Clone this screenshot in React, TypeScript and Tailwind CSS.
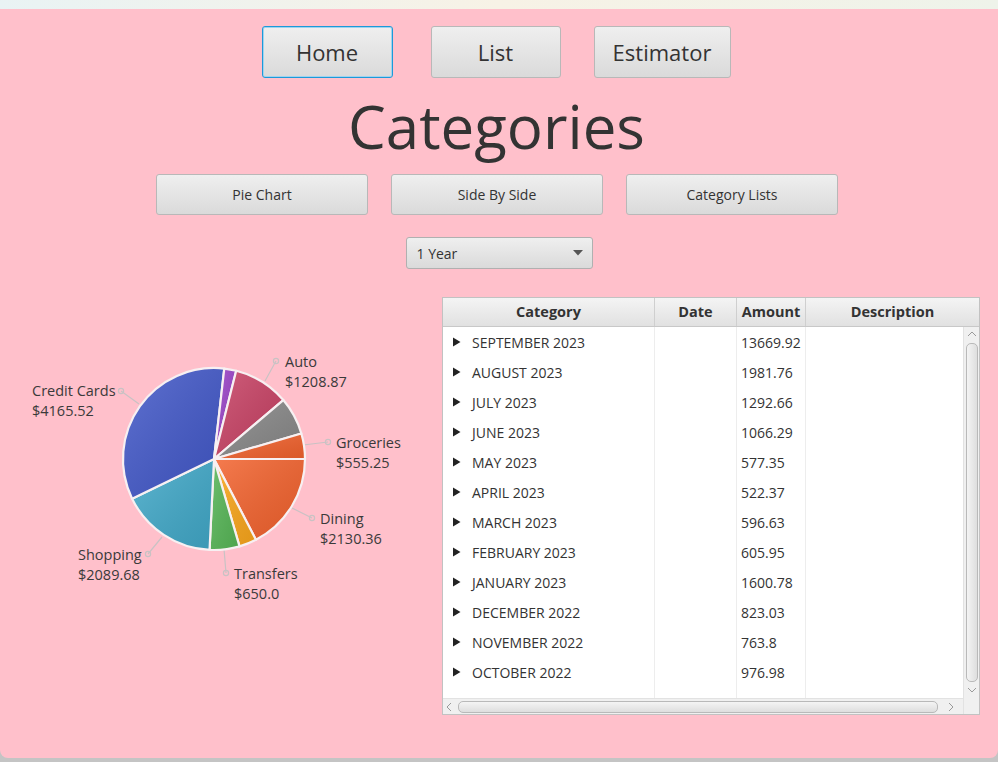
import React from "react";

const slices = [
  { name: "Dining", v: 2130.36, c: "#f3622d" },
  { name: "y", v: 380, c: "#fba71b" },
  { name: "Transfers", v: 650, c: "#57b757" },
  { name: "Shopping", v: 2089.68, c: "#41a9c9" },
  { name: "Credit Cards", v: 4165.52, c: "#4258c9" },
  { name: "p", v: 260, c: "#9a42c8" },
  { name: "Auto", v: 1208.87, c: "#c84164" },
  { name: "g", v: 820, c: "#888888" },
  { name: "Groceries", v: 555.25, c: "#f3622d" },
];

const labels = [
  { t: "Credit Cards", v: "$4165.52", x: 32, y: 99, m: [121, 94], e: [139, 107] },
  { t: "Auto", v: "$1208.87", x: 285, y: 70, m: [276, 64], e: [265, 84] },
  { t: "Groceries", v: "$555.25", x: 336, y: 151, m: [328, 145], e: [303, 148] },
  { t: "Dining", v: "$2130.36", x: 320, y: 227, m: [312, 221], e: [292, 211] },
  { t: "Shopping", v: "$2089.68", x: 78, y: 263, m: [148, 257], e: [162, 240] },
  { t: "Transfers", v: "$650.0", x: 234, y: 282, m: [226, 276], e: [224, 252] },
];

function Pie() {
  const cx = 214;
  const cy = 162;
  const r = 91;
  const total = slices.reduce((a, s) => a + s.v, 0);
  let acc = 0;
  const paths = slices.map((s, i) => {
    const a0 = (acc / total) * Math.PI * 2;
    acc += s.v;
    const a1 = (acc / total) * Math.PI * 2;
    const x0 = cx + r * Math.cos(a0);
    const y0 = cy + r * Math.sin(a0);
    const x1 = cx + r * Math.cos(a1);
    const y1 = cy + r * Math.sin(a1);
    const large = a1 - a0 > Math.PI ? 1 : 0;
    const d = `M${cx},${cy} L${x0},${y0} A${r},${r} 0 ${large} 1 ${x1},${y1} Z`;
    return (
      <g key={i}>
        <path d={d} fill={s.c} />
        <path d={d} fill="url(#shade)" stroke="#f7f0f2" strokeWidth={2.2} strokeLinejoin="round" />
      </g>
    );
  });
  return (
    <svg width={442} height={418} viewBox="0 0 442 418" className="shrink-0">
      <defs>
        <linearGradient id="shade" x1="0" y1="0" x2="1" y2="1">
          <stop offset="0" stopColor="#ffffff" stopOpacity="0.16" />
          <stop offset="1" stopColor="#000000" stopOpacity="0.1" />
        </linearGradient>
      </defs>
      {labels.map((l, i) => (
        <g key={"l" + i}>
          <line x1={l.m[0]} y1={l.m[1]} x2={l.e[0]} y2={l.e[1]} stroke="#c9c2c4" strokeWidth={1.2} />
          <circle cx={l.m[0]} cy={l.m[1]} r={2.6} fill="none" stroke="#c9c2c4" strokeWidth={1.2} />
        </g>
      ))}
      {paths}
      {labels.map((l, i) => (
        <text key={"t" + i} x={l.x} y={l.y} fontSize={14.5} fill="#3a3a3a" fontFamily="'Open Sans', sans-serif">
          <tspan x={l.x} y={l.y}>{l.t}</tspan>
          <tspan x={l.x} y={l.y + 20}>{l.v}</tspan>
        </text>
      ))}
    </svg>
  );
}

const rows: [string, string][] = [
  ["SEPTEMBER 2023", "13669.92"],
  ["AUGUST 2023", "1981.76"],
  ["JULY 2023", "1292.66"],
  ["JUNE 2023", "1066.29"],
  ["MAY 2023", "577.35"],
  ["APRIL 2023", "522.37"],
  ["MARCH 2023", "596.63"],
  ["FEBRUARY 2023", "605.95"],
  ["JANUARY 2023", "1600.78"],
  ["DECEMBER 2022", "823.03"],
  ["NOVEMBER 2022", "763.8"],
  ["OCTOBER 2022", "976.98"],
];

function Table() {
  return (
    <div className="w-[538px] h-[418px] border border-[#c2c2c2] bg-white flex flex-col shrink-0">
      <div className="flex h-[29px] bg-gradient-to-b from-[#f4f4f4] to-[#e1e1e1] border-b border-[#c8c8c8] text-[14.5px] font-bold text-[#333]">
        <div className="w-[212px] flex items-center justify-center border-r border-[#cfcfcf]">Category</div>
        <div className="w-[82px] flex items-center justify-center border-r border-[#cfcfcf]">Date</div>
        <div className="w-[69px] flex items-center justify-center border-r border-[#cfcfcf]">Amount</div>
        <div className="flex-1 flex items-center justify-center">Description</div>
      </div>
      <div className="flex flex-1">
        <div className="flex-1 flex flex-col relative">
          <div className="flex flex-1">
            <div className="w-[212px] border-r border-[#ededed] flex flex-col">
              {rows.map(([n]) => (
                <div key={n} className="h-[30px] flex items-center pl-[10px] text-[14px] text-[#333]">
                  <svg width="8" height="10" viewBox="0 0 8 10" className="mr-[11px]">
                    <path d="M0 0.5 L7.5 5 L0 9.5 Z" fill="#222" />
                  </svg>
                  <span>{n}</span>
                </div>
              ))}
            </div>
            <div className="w-[82px] border-r border-[#ededed]" />
            <div className="w-[69px] border-r border-[#ededed] flex flex-col">
              {rows.map(([n, a]) => (
                <div key={n} className="h-[30px] flex items-center pl-[4px] text-[14px] text-[#333]">
                  {a}
                </div>
              ))}
            </div>
            <div className="flex-1" />
          </div>
          <div className="h-[16px] bg-[#f0f0f0] border-t border-[#e2e2e2] flex items-center">
            <svg width="14" height="16" viewBox="0 0 14 16">
              <path d="M8 4 L4 8 L8 12" fill="none" stroke="#9a9a9a" strokeWidth="1" />
            </svg>
            <div className="flex-1 h-[12px] mx-[1px] rounded-[5px] border border-[#b9b9b9] bg-gradient-to-b from-[#f4f4f4] to-[#dedede]" />
            <svg width="24" height="16" viewBox="0 0 24 16">
              <path d="M10 4 L14 8 L10 12" fill="none" stroke="#9a9a9a" strokeWidth="1" />
            </svg>
          </div>
        </div>
        <div className="w-[16px] bg-[#f0f0f0] border-l border-[#e2e2e2] flex flex-col items-center">
          <svg width="14" height="16" viewBox="0 0 14 16">
            <path d="M3 9 L7 5 L11 9" fill="none" stroke="#9a9a9a" strokeWidth="1" />
          </svg>
          <div className="flex-1 w-[12px] rounded-[5px] border border-[#b9b9b9] bg-gradient-to-r from-[#f4f4f4] to-[#dedede]" />
          <svg width="14" height="16" viewBox="0 0 14 16">
            <path d="M3 6 L7 10 L11 6" fill="none" stroke="#9a9a9a" strokeWidth="1" />
          </svg>
          <div className="h-[16px]" />
        </div>
      </div>
    </div>
  );
}

const btn =
  "border border-[#b8b8b8] rounded-[3px] bg-gradient-to-b from-[#efefef] to-[#dadada] text-[#333] flex items-center justify-center";

export default function App() {
  return (
    <div className="w-[998px] h-[762px] bg-[#c4c4c4] font-['Open_Sans',sans-serif] flex flex-col overflow-hidden">
      <div className="h-[9px] bg-gradient-to-r from-[#e9f3f4] via-[#f7f2e6] to-[#eef3ea]" />
      <div className="h-[749px] bg-[#ffc0cb] rounded-b-[8px] flex flex-col items-center">
        <div className="flex mt-[17px] ml-[-6px]">
          <div className={`${btn} w-[131px] h-[52px] text-[22px] !border-[#1c9ad9] shadow-[inset_0_0_0_1px_#9fd3ef]`}>Home</div>
          <div className={`${btn} w-[130px] h-[52px] text-[22px] ml-[38px]`}>List</div>
          <div className={`${btn} w-[137px] h-[52px] text-[22px] ml-[33px]`}>Estimator</div>
        </div>
        <div className="h-[96px] flex items-center justify-center text-[60px] text-[#333] leading-none ml-[-5px]">
          Categories
        </div>
        <div className="flex gap-[23px] ml-[-4px]">
          <div className={`${btn} w-[212px] h-[41px] text-[14px]`}>Pie Chart</div>
          <div className={`${btn} w-[212px] h-[41px] text-[14px]`}>Side By Side</div>
          <div className={`${btn} w-[212px] h-[41px] text-[14px]`}>Category Lists</div>
        </div>
        <div className={`mt-[22px] ml-[0px] w-[187px] h-[32px] border border-[#b0b0b0] rounded-[3px] bg-gradient-to-b from-[#efefef] to-[#dadada] flex items-center justify-between pl-[10px] pr-[9px] text-[14px] text-[#333]`}>
          <span>1 Year</span>
          <svg width="10" height="6" viewBox="0 0 10 6">
            <path d="M0 0 L10 0 L5 5.5 Z" fill="#555" />
          </svg>
        </div>
        <div className="mt-[28px] w-full flex">
          <Pie />
          <Table />
        </div>
      </div>
    </div>
  );
}
